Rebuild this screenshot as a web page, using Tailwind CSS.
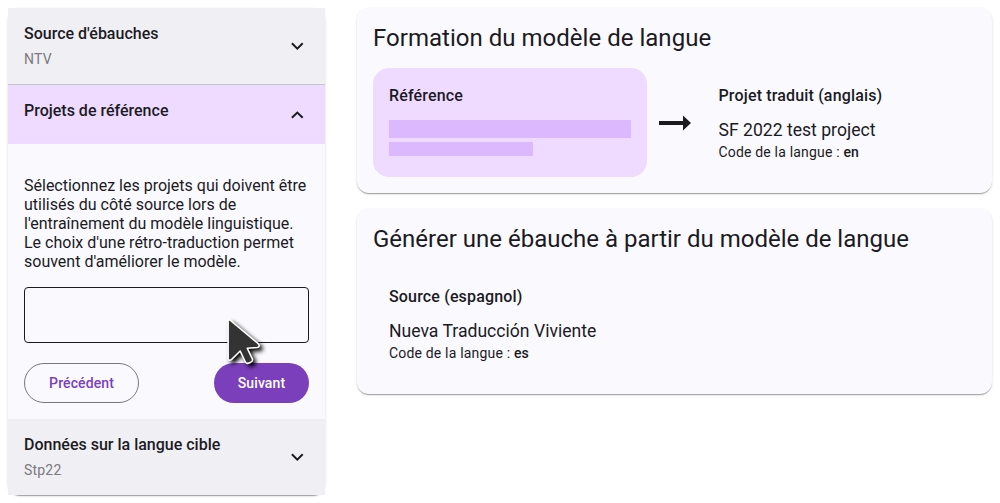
<!DOCTYPE html>
<html lang="fr">
<head>
<meta charset="utf-8">
<title>Formation du modèle de langue</title>
<script src="https://cdn.jsdelivr.net/npm/@tailwindcss/browser@4"></script>
</head>
<body class="bg-white font-[Roboto,sans-serif] text-[#1b1b1f]">
<main class="flex h-[503px] w-[1000px] items-start gap-8 overflow-hidden p-2">
  <aside class="w-[317px] shrink-0 rounded-xl text-base leading-[19px] shadow-[0_2px_1px_-1px_rgba(0,0,0,0.2),0_1px_1px_0_rgba(0,0,0,0.14),0_1px_3px_0_rgba(0,0,0,0.12)]">
    <div class="flex h-[77px] items-center justify-between border-b border-[#c5c6c9] bg-[#f0eff4] px-4">
      <div>
        <h3 class="font-medium leading-6">Source d'ébauches</h3>
        <p class="mt-px text-sm leading-6 tracking-[0.2px] text-[#7b7a7f]">NTV</p>
      </div>
      <svg class="mr-[5px] h-2 w-3.5" viewBox="0 0 14 8" fill="none" stroke="#1b1b1f" stroke-width="2"><path d="M1.9 1.3 7.3 6.6l5.4-5.3"/></svg>
    </div>
    <div class="flex h-[59px] items-center justify-between bg-[#eedbff] px-4">
      <h3 class="mb-2 font-medium leading-6">Projets de référence</h3>
      <svg class="mr-[5px] h-2 w-3.5" viewBox="0 0 14 8" fill="none" stroke="#1b1b1f" stroke-width="2"><path d="M1.9 6.8 7.3 1.6l5.4 5.2"/></svg>
    </div>
    <div class="h-[275px] bg-[#faf9fe] px-4 pt-8">
      <p class="whitespace-nowrap">Sélectionnez les projets qui doivent être<br>utilisés du côté source lors de<br>l'entraînement du modèle linguistique.<br>Le choix d'une rétro-traduction permet<br>souvent d'améliorer le modèle.</p>
      <div class="relative mt-4 h-14 rounded border border-[#1b1b1f]">
        <svg class="absolute left-[198px] top-[26.5px] z-10 h-[57.7px] w-[45.3px] overflow-visible drop-shadow-[3px_3px_2px_rgba(0,0,0,0.95)]" viewBox="0 0 44 56"><path d="M5 6.5Q5 3.8 7.2 5.2L34.2 27.8Q36.5 30.5 33.5 31.6L23.5 32.2 28.6 42.8Q29.2 44.6 27 45.8L24.5 46.8Q22.5 47.4 21.6 45.4L16.7 35 8.7 42.8Q5.8 45.3 5 42.5Z" fill="#333" stroke="#fff" stroke-width="1.5" stroke-linejoin="round"/></svg>
      </div>
      <div class="mt-5 flex justify-between text-sm font-medium">
        <button class="h-10 w-[115px] rounded-full border border-[#7b757f] tracking-[0.1px] text-[#7b3fbf]">Précédent</button>
        <button class="h-10 w-[95px] rounded-full bg-[#7b3fbb] tracking-[0.1px] text-white">Suivant</button>
      </div>
    </div>
    <div class="flex h-[76px] items-center justify-between bg-[#f0eff4] px-4">
      <div>
        <h3 class="font-medium leading-6">Données sur la langue cible</h3>
        <p class="mt-px text-sm leading-6 tracking-[0.2px] text-[#7b7a7f]">Stp22</p>
      </div>
      <svg class="mr-[5px] h-2 w-3.5" viewBox="0 0 14 8" fill="none" stroke="#1b1b1f" stroke-width="2"><path d="M1.9 1.3 7.3 6.6l5.4-5.3"/></svg>
    </div>
  </aside>
  <div class="flex w-[635px] flex-col gap-4">
    <section class="h-[185px] rounded-xl bg-[#faf9fe] px-4 pt-3.5 shadow-[0_2px_1px_-1px_rgba(0,0,0,0.2),0_1px_1px_0_rgba(0,0,0,0.14),0_1px_3px_0_rgba(0,0,0,0.12)]">
      <h2 class="text-2xl leading-8 tracking-[0.02px]">Formation du modèle de langue</h2>
      <div class="mt-3.5 flex">
        <div class="h-[109px] w-[274px] rounded-2xl bg-[#eedbff] px-4 pt-4">
          <h4 class="font-medium leading-6 tracking-[0.16px]">Référence</h4>
          <div class="mt-3 h-[18px] w-[242px] bg-[#dcb8ff]"></div>
          <div class="mt-1 h-3.5 w-36 bg-[#dcb8ff]"></div>
        </div>
        <svg class="ml-3 mt-[47px] h-4 w-8" viewBox="0 0 32 16" fill="#1b1b1f"><path d="M0 6h24V.5L32 8l-8 7.5V10H0z"/></svg>
        <div class="ml-[27.5px] pt-4">
          <h4 class="font-medium leading-6 tracking-[0.16px]">Projet traduit (anglais)</h4>
          <p class="mt-2.5 text-[17.6px] leading-6">SF 2022 test project</p>
          <p class="text-sm leading-5 tracking-[0.18px]">Code de la langue : <b class="font-medium">en</b></p>
        </div>
      </div>
    </section>
    <section class="h-[185px] rounded-xl bg-[#faf9fe] px-4 pt-3.5 shadow-[0_2px_1px_-1px_rgba(0,0,0,0.2),0_1px_1px_0_rgba(0,0,0,0.14),0_1px_3px_0_rgba(0,0,0,0.12)]">
      <h2 class="text-2xl leading-8">Générer une ébauche à partir du modèle de langue</h2>
      <div class="mt-3.5 px-4 pt-4">
        <h4 class="font-medium leading-6 tracking-[0.16px]">Source (espagnol)</h4>
        <p class="mt-2.5 text-[17.6px] leading-6">Nueva Traducción Viviente</p>
        <p class="text-sm leading-5 tracking-[0.18px]">Code de la langue : <b class="font-medium">es</b></p>
      </div>
    </section>
  </div>
</main>
</body>
</html>
